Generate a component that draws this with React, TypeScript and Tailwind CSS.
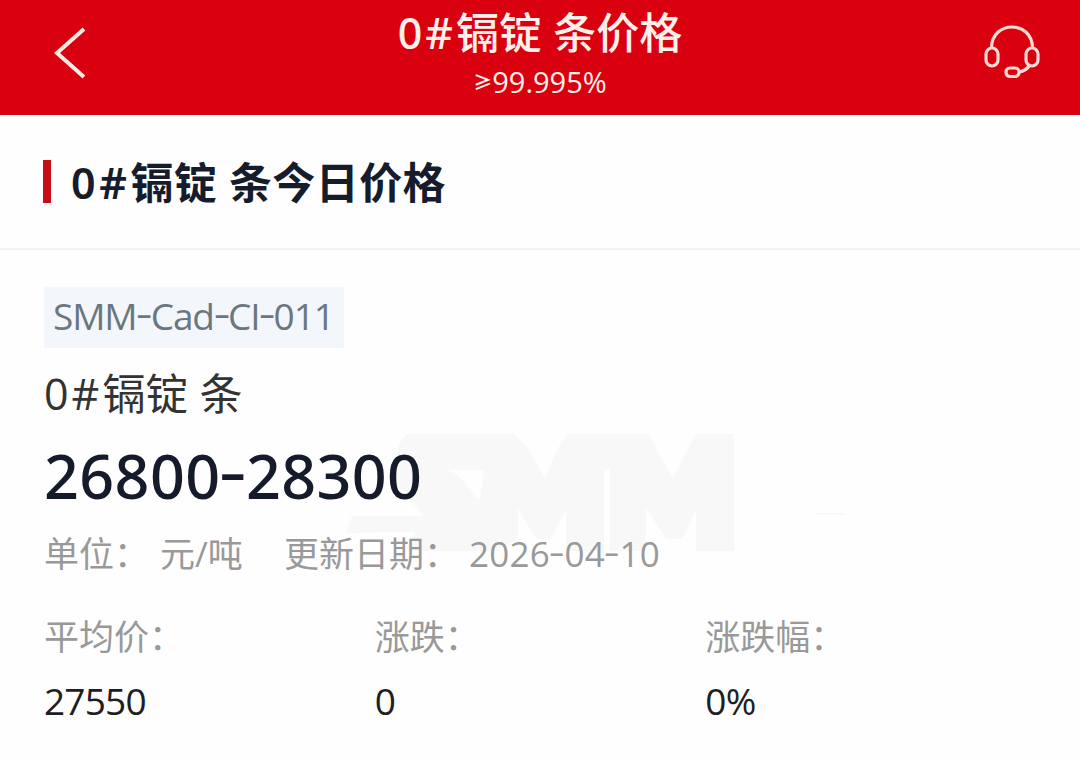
import { Fragment } from "react";

const stats = [
  { label: "平均价：", value: "27550" },
  { label: "涨跌：", value: "0" },
  { label: "涨跌幅：", value: "0%" },
];

// Hyphens are wide and sit at half the digit height
const Dashed = ({ text }: { text: string }) => (
  <>
    {text.split("-").map((part, i) => (
      <Fragment key={i}>
        {i > 0 && (
          <span className="mx-[0.045em] inline-block origin-center -translate-y-[0.08em] scale-x-140">
            -
          </span>
        )}
        {part}
      </Fragment>
    ))}
  </>
);

const BackIcon = () => (
  <svg width="34" height="54" viewBox="0 0 34 54" fill="none" stroke="#ffeae4" strokeWidth="4">
    <path d="M31 3 L4 27 L31 51" />
  </svg>
);

const HeadsetIcon = () => (
  <svg width="56" height="54" viewBox="0 0 56 54" fill="none" stroke="#ffd9d3" strokeWidth="3.2">
    <path d="M7.5 23 C7.5 -5 48.5 -5 48.5 23" />
    <rect x="2" y="23" width="12" height="18" rx="6" />
    <rect x="42" y="23" width="12" height="18" rx="6" />
    <path d="M46 40 Q42 46 35 47" />
    <rect x="22" y="43" width="13" height="8.5" rx="4" />
  </svg>
);

const Watermark = () => (
  <svg
    className="absolute left-[346px] top-[184px]"
    width="500"
    height="118"
    viewBox="0 0 500 118"
    fill="#f8f8f9"
  >
    <path d="M62 0 H168 L182 14 L199 44 L212 14 L222 0 H302 L327 44 L350 0 H388 V117 H350 V76 L336 105 L320 105 L300 74 V117 H264 V35 L258 35 V117 H220 V76 L205 105 H190 L172 74 V105 L152 117 H60 L70 98 L0 99 L6 82 H78 L50 50 Q46 10 62 0 Z M98 36 Q110 36 119 50 Q128 62 134 66 L138 36 Z" />
    <path d="M470 79 h28 v2 h-28 Z" />
  </svg>
);

export default function App() {
  return (
    <div className="h-[761px] w-[1080px] overflow-hidden bg-[#fefefe] font-['Open_Sans','Noto_Sans_CJK_SC',sans-serif]">
      <header className="flex h-[115px] justify-between bg-[#d9000f] pl-[53px] pr-[40px] text-[#fff0ea]">
        <button className="mt-[26px] h-[54px] w-[43px]">
          <BackIcon />
        </button>
        <div className="flex flex-col items-center">
          <h1 className="h-[68px] whitespace-pre font-['Noto_Sans','Noto_Sans_CJK_SC',sans-serif] text-[43px] font-medium leading-[66px]">
            <span className="tracking-[3px]">0#</span>镉锭 条价格
          </h1>
          <p className="flex items-center text-[29px] leading-[28px]">
            <span className="font-['Noto_Sans_CJK_SC'] text-[19px] font-bold">≥</span>
            99.995%
          </p>
        </div>
        <button className="mt-[25px] h-[54px] w-[56px]">
          <HeadsetIcon />
        </button>
      </header>

      <div className="flex h-[135px] items-center border-b-2 border-[#f3f3f4] pl-[43px]">
        <span className="h-[43px] w-[8px] bg-[#c70d16]" />
        <h2 className="ml-[20px] mt-[2px] whitespace-pre font-['Noto_Sans','Noto_Sans_CJK_SC',sans-serif] text-[43px] font-bold leading-[60px] tracking-[0.4px] text-[#161c2c]">
          <span className="font-semibold tracking-[3.6px]">0#</span>镉锭 条今日价格
        </h2>
      </div>

      <main className="relative px-[44px] pt-[37px]">
        <Watermark />
        <div className="relative">
          <div className="h-[61px] w-[300px] whitespace-nowrap bg-[#f3f6fb] pl-[9px] text-[37px] leading-[57px] tracking-[-1.1px] text-[#6b7780]">
            <Dashed text="SMM-Cad-CI-011" />
          </div>
          <p className="mt-[16px] h-[60px] whitespace-pre text-[43px] leading-[60px] text-[#333]">
            <span className="tracking-[3px]">0#</span>镉锭 条
          </p>
          <p className="mt-[16px] h-[72px] font-['Noto_Sans'] text-[61px] font-medium leading-[72px] tracking-[0.4px] text-[#151b2b]">
            <Dashed text="26800-28300" />
          </p>
          <div className="mt-[18px] flex h-[48px] text-[35px] leading-[48px] text-[#999]">
            <span className="w-[116px] whitespace-nowrap">单位：</span>
            <span className="w-[124px] whitespace-nowrap">元/吨</span>
            <span className="w-[185px] whitespace-nowrap">更新日期：</span>
            <span className="whitespace-nowrap tracking-[0.2px]">
              <Dashed text="2026-04-10" />
            </span>
          </div>
          <dl className="mt-[34px] flex">
            {stats.map((stat) => (
              <div key={stat.label} className="w-[331px]">
                <dt className="h-[50px] text-[35px] leading-[50px] text-[#999]">{stat.label}</dt>
                <dd className="mt-[14px] h-[50px] text-[37px] leading-[50px] tracking-[-0.8px] text-[#1d2023]">
                  {stat.value}
                </dd>
              </div>
            ))}
          </dl>
        </div>
      </main>
    </div>
  );
}
